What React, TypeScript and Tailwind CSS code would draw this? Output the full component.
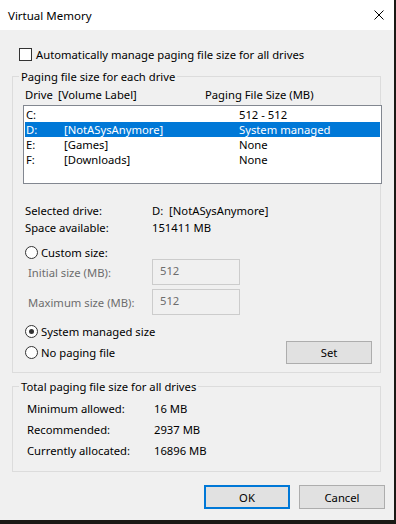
import React from "react";

function Radio({ checked }: { checked?: boolean }) {
  return (
    <span className="w-[13px] h-[13px] rounded-full border border-[#333333] bg-white flex items-center justify-center shrink-0">
      {checked && <span className="w-[5px] h-[5px] rounded-full bg-[#333333]" />}
    </span>
  );
}

const drives = [
  { d: "C:", label: "", size: "512 - 512", sel: false },
  { d: "D:", label: "[NotASysAnymore]", size: "System managed", sel: true },
  { d: "E:", label: "[Games]", size: "None", sel: false },
  { d: "F:", label: "[Downloads]", size: "None", sel: false },
];

export default function App() {
  return (
    <div className="w-[396px] h-[524px] bg-[#1a1915] font-['Noto_Sans',sans-serif] text-[11.25px] leading-[15px] text-black overflow-hidden">
      <div className="w-[394px] h-[520px] bg-[#f0f0f0] flex flex-col">
        <div className="h-[30px] bg-white flex items-center justify-between pl-[8px] pr-[10px] shrink-0">
          <span className="text-[11.5px]">Virtual Memory</span>
          <svg width="10" height="10" viewBox="0 0 10 10">
            <path d="M0.5 0.5 L9.5 9.5 M9.5 0.5 L0.5 9.5" stroke="#000" strokeWidth="1" />
          </svg>
        </div>

        <div className="mt-[17px] ml-[19px] flex items-center gap-[4px] h-[15px]">
          <span className="w-[13px] h-[13px] border border-[#333333] bg-white shrink-0" />
          <span>Automatically manage paging file size for all drives</span>
        </div>

        <fieldset className="mt-[7px] ml-[12px] w-[369px] min-w-0 border border-[#dcdcdc] pb-[8px]">
          <legend className="ml-[6px] px-[2px] leading-[15px]">Paging file size for each drive</legend>
          <div className="mt-[3px] ml-[12px] flex h-[15px] items-center">
            <span className="w-[33px]">Drive</span>
            <span className="w-[147px]">[Volume Label]</span>
            <span>Paging File Size (MB)</span>
          </div>
          <div className="mt-[3px] ml-[10px] w-[359px] h-[79px] border border-[#828790] bg-white pt-[1px] px-[1px] relative">
            {drives.map((r) => (
              <div
                key={r.d}
                className={
                  r.sel
                    ? "flex h-[15px] items-center bg-[#0078d7] text-white"
                    : "flex h-[15px] items-center"
                }
              >
                <span className="w-[39px] pl-[1px]">{r.d}</span>
                <span className="w-[175px]">{r.label}</span>
                <span>{r.size}</span>
              </div>
            ))}
          </div>

          <div className="mt-[18px] ml-[12px] flex h-[17px] items-center">
            <span className="w-[127px]">Selected drive:</span>
            <span className="whitespace-pre">D:  [NotASysAnymore]</span>
          </div>
          <div className="ml-[12px] flex h-[17px] items-center">
            <span className="w-[127px]">Space available:</span>
            <span>151411 MB</span>
          </div>

          <div className="mt-[9px] ml-[12px] flex h-[14px] items-center gap-[3px]">
            <Radio />
            <span>Custom size:</span>
          </div>
          <div className="ml-[15px] flex h-[26px] items-center">
            <span className="w-[124px] text-[#6d6d6d]">Initial size (MB):</span>
            <div className="w-[88px] h-[26px] border border-[#cccccc] bg-[#f0f0f0] pl-[7px] pt-[3px] text-[#6d6d6d]">512</div>
          </div>
          <div className="mt-[4px] ml-[15px] flex h-[26px] items-center">
            <span className="w-[124px] text-[#6d6d6d]">Maximum size (MB):</span>
            <div className="w-[88px] h-[26px] border border-[#cccccc] bg-[#f0f0f0] pl-[7px] pt-[3px] text-[#6d6d6d]">512</div>
          </div>

          <div className="mt-[9px] ml-[12px] flex h-[15px] items-center gap-[3px]">
            <Radio checked />
            <span>System managed size</span>
          </div>
          <div className="mt-[2px] ml-[12px] mr-[8px] flex h-[23px] items-center justify-between">
            <div className="flex items-center gap-[3px]">
              <Radio />
              <span>No paging file</span>
            </div>
            <button className="w-[86px] h-[23px] border border-[#adadad] bg-[#e1e1e1] flex items-center justify-center">
              Set
            </button>
          </div>
        </fieldset>

        <fieldset className="mt-[6px] ml-[12px] w-[369px] min-w-0 border border-[#dcdcdc] pb-[10px]">
          <legend className="ml-[6px] px-[2px] leading-[15px]">Total paging file size for all drives</legend>
          <div className="mt-[4px] ml-[14px] flex h-[21px] items-center">
            <span className="w-[127px]">Minimum allowed:</span>
            <span>16 MB</span>
          </div>
          <div className="ml-[14px] flex h-[21px] items-center">
            <span className="w-[127px]">Recommended:</span>
            <span>2937 MB</span>
          </div>
          <div className="ml-[14px] flex h-[21px] items-center">
            <span className="w-[127px]">Currently allocated:</span>
            <span>16896 MB</span>
          </div>
        </fieldset>

        <div className="mt-[13px] flex justify-end gap-[9px] pr-[9px]">
          <button className="w-[86px] h-[24px] border-2 border-[#0078d7] bg-[#e1e1e1] flex items-center justify-center">
            OK
          </button>
          <button className="w-[86px] h-[24px] border border-[#adadad] bg-[#e1e1e1] flex items-center justify-center">
            Cancel
          </button>
        </div>
      </div>
    </div>
  );
}
